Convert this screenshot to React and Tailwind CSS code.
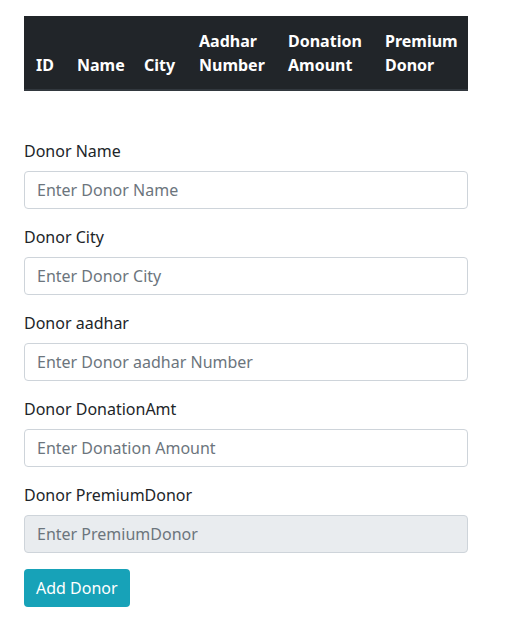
export default function App() {
  const fields = [
    ["Donor Name", "Enter Donor Name", false],
    ["Donor City", "Enter Donor City", false],
    ["Donor aadhar", "Enter Donor aadhar Number", false],
    ["Donor DonationAmt", "Enter Donation Amount", false],
    ["Donor PremiumDonor", "Enter PremiumDonor", true],
  ];
  const th = "px-3 pt-[13px] pb-3 text-left align-bottom font-bold border-b-2 border-[#32383e] whitespace-normal";
  return (
    <div className="bg-white min-h-[630px] pl-6 pt-4 text-[#212529] text-base leading-6" style={{ fontFamily: '"Segoe UI", "Noto Sans", sans-serif' }}>
      <div className="w-[444px]">
        <table className="w-full border-collapse table-fixed">
          <thead>
            <tr className="bg-[#212529] text-white">
              <th className={`w-[41px] ${th}`}>ID</th>
              <th className={`w-[67px] ${th}`}>Name</th>
              <th className={`w-[55px] ${th}`}>City</th>
              <th className={`w-[89px] ${th}`}>Aadhar Number</th>
              <th className={`w-[97px] ${th}`}>Donation Amount</th>
              <th className={`w-[95px] ${th}`}>Premium Donor</th>
            </tr>
          </thead>
        </table>
        <form className="mt-[48px]">
          {fields.map(([label, ph, disabled]) => (
            <div key={label} className="mb-4">
              <label className="block mb-2">{label}</label>
              <input
                disabled={disabled}
                placeholder={ph}
                className={`block w-full h-[38px] px-3 py-1.5 text-base border border-[#ced4da] rounded placeholder:text-[#6c757d] ${disabled ? "bg-[#e9ecef]" : "bg-white"}`}
              />
            </div>
          ))}
          <button type="button" className="h-[38px] px-3 bg-[#17a2b8] text-white rounded text-base">Add Donor</button>
        </form>
      </div>
    </div>
  );
}
